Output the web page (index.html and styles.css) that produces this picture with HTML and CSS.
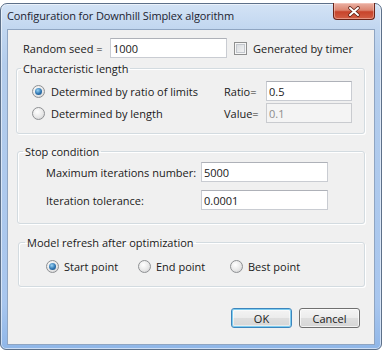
FILE: index.html
```html
<!DOCTYPE html>
<html>
<head>
<meta charset="utf-8">
<link rel="stylesheet" href="styles.css">
</head>
<body>
<div class="window">
  <div class="titlebar">
    <span class="title">Configuration for Downhill Simplex algorithm</span>
    <div class="close">
      <svg width="40" height="17" viewBox="0 0 40 17">
        <path d="M16 5 L24 12 M24 5 L16 12" stroke="#5a1d12" stroke-width="3.6" stroke-linecap="round"/>
        <path d="M16 5 L24 12 M24 5 L16 12" stroke="#ffffff" stroke-width="2" stroke-linecap="round"/>
      </svg>
    </div>
  </div>
  <div class="client">
    <div class="seed-row">
      <span class="seed-label">Random seed =</span>
      <input class="tb tb-seed" value="1000">
      <span class="check"></span>
      <span class="check-label">Generated by timer</span>
    </div>

    <fieldset class="group g1">
      <legend>Characteristic length</legend>
      <div class="g1-grid">
        <div class="opt"><span class="radio on"></span>Determined by ratio of limits</div>
        <span class="key">Ratio=</span>
        <input class="tb" value="0.5">
        <div class="opt"><span class="radio"></span>Determined by length</div>
        <span class="key">Value=</span>
        <input class="tb" value="0.1" disabled>
      </div>
    </fieldset>

    <fieldset class="group g2">
      <legend>Stop condition</legend>
      <div class="g2-grid">
        <span class="key">Maximum iterations number:</span>
        <input class="tb" value="5000">
        <span class="key">Iteration tolerance:</span>
        <input class="tb" value="0.0001">
      </div>
    </fieldset>

    <fieldset class="group g3">
      <legend>Model refresh after optimization</legend>
      <div class="g3-row">
        <div class="opt opt3"><span class="radio on"></span>Start point</div>
        <div class="opt opt3"><span class="radio"></span>End point</div>
        <div class="opt opt3"><span class="radio"></span>Best point</div>
      </div>
    </fieldset>

    <div class="buttons">
      <button class="btn btn-default">OK</button>
      <button class="btn">Cancel</button>
    </div>
  </div>
</div>
</body>
</html>
```

FILE: styles.css
```css
* { box-sizing: border-box; }
html, body { margin: 0; padding: 0; }
body {
  width: 383px;
  height: 352px;
  overflow: hidden;
  background: #ffffff;
  font-family: "Open Sans", "Noto Sans", sans-serif;
  font-size: 11px;
  color: #1a1a1a;
}
.window {
  margin-top: 3px;
  width: 382px;
  height: 347px;
  border: 1px solid #5d7089;
  border-radius: 7px 7px 6px 6px;
  background: linear-gradient(180deg, #d3e3f5 0px, #c2d7f0 24px, #b4cdec 60px, #a8c6ee 300px, #8fb6e8 346px);
  box-shadow: inset 0 0 0 1px rgba(255,255,255,0.55);
  padding: 0 6px 4px 6px;
  display: flex;
  flex-direction: column;
}
.titlebar {
  height: 25px;
  display: flex;
  align-items: flex-start;
  justify-content: space-between;
  flex: none;
}
.title {
  font-size: 11px;
  letter-spacing: -0.1px;
  line-height: 16px;
  padding-top: 4px;
  color: #1c2330;
}
.close {
  width: 42px;
  height: 17px;
  margin-top: -1px;
  border: 1px solid #6a2418;
  border-top: none;
  border-radius: 0 0 4px 4px;
  background: linear-gradient(180deg, #eab1a4 0%, #dc8570 45%, #c7442b 55%, #d25f45 100%);
  box-shadow: inset 0 0 0 1px rgba(255,220,210,0.45);
  display: flex;
  align-items: center;
  justify-content: center;
}
.close svg { display: block; }
.client {
  flex: 1;
  border: 1px solid #8fa5c2;
  background: #f0f0f0;
  padding: 8px 9px 0 8px;
}
.seed-row {
  display: flex;
  align-items: center;
  height: 20px;
}
.seed-label { margin-left: 7px; width: 87px; }
.tb {
  -webkit-appearance: none;
  appearance: none;
  height: 20px;
  margin: 0;
  border: 1px solid #c9ccd2;
  border-top-color: #aeb1b8;
  border-radius: 0;
  background: #ffffff;
  font-family: "Open Sans", "Noto Sans", sans-serif;
  font-size: 11px;
  color: #1a1a1a;
  padding: 0 2px;
  outline: none;
}
.tb:disabled {
  background: #f4f4f4;
  color: #8d8d8d;
  border-color: #c9cbcf;
}
.tb-seed { width: 117px; }
.check {
  width: 13px;
  height: 13px;
  margin-left: 7px;
  border: 1px solid #8e8f8f;
  background: linear-gradient(135deg, #d3d6da, #f8f8f8);
  box-shadow: inset 0 0 0 1px #f6f6f6, inset 0 0 0 2px #c4c8ce;
  flex: none;
}
.check-label { margin-left: 6px; }

.group {
  margin: 0;
  padding: 0;
  min-width: 0;
  border: 1px solid #d3dbe0;
  border-radius: 3px;
  box-shadow: inset 1px 1px 0 #ffffff, 1px 1px 0 #ffffff;
}
.group legend {
  padding: 0 2px;
  line-height: 15px;
  color: #1a1a1a;
}
.g1 { margin-top: 3px; width: 349px; }
.g1 legend { margin-left: 4px; }
.g2 { margin-top: 10px; margin-left: 1px; width: 348px; }
.g2 legend { margin-left: 5px; }
.g3 { margin-top: 11px; margin-left: 2px; width: 347px; }
.g3 legend { margin-left: 6px; }

.g1-grid {
  display: grid;
  grid-template-columns: 192px 42px 86px;
  grid-auto-rows: 20px;
  row-gap: 2px;
  align-items: center;
  margin: 5px 0 10px 15px;
}
.opt {
  display: flex;
  align-items: center;
  gap: 6px;
}
.g1-grid .tb { width: 86px; }

.radio {
  width: 13px;
  height: 13px;
  border-radius: 50%;
  border: 1px solid #8e9093;
  background: radial-gradient(circle at 40% 35%, #ffffff 0%, #e8e8e8 55%, #c9cacc 100%);
  display: inline-flex;
  align-items: center;
  justify-content: center;
  flex: none;
}
.radio.on::after {
  content: "";
  width: 7px;
  height: 7px;
  border-radius: 50%;
  background: radial-gradient(circle at 40% 35%, #9ad4f5 0%, #2e74b0 55%, #1a4a78 100%);
}

.g2-grid {
  display: grid;
  grid-template-columns: 155px 127px;
  grid-auto-rows: 20px;
  row-gap: 8px;
  align-items: center;
  margin: 3px 0 13px 28px;
}
.g2-grid .tb { width: 127px; }

.g3-row {
  display: flex;
  align-items: center;
  height: 20px;
  margin: 6px 0 10px 27px;
}
.opt3 { width: 92px; gap: 5px; }

.buttons {
  display: flex;
  justify-content: flex-end;
  gap: 7px;
  margin-top: 21px;
  margin-right: 5px;
}
.btn {
  width: 61px;
  height: 20px;
  margin: 0;
  padding: 0;
  border: 1px solid #707070;
  border-radius: 3px;
  background: linear-gradient(180deg, #f4f4f4 0%, #ececec 48%, #dedede 52%, #d6d6d6 100%);
  box-shadow: inset 0 0 0 1px rgba(255,255,255,0.7);
  font-family: "Open Sans", "Noto Sans", sans-serif;
  font-size: 11px;
  color: #1a1a1a;
}
.btn-default {
  border-color: #3c85bd;
  box-shadow: inset 0 0 0 1px #7fcdf0, inset 0 0 0 2px rgba(255,255,255,0.5);
}
```
